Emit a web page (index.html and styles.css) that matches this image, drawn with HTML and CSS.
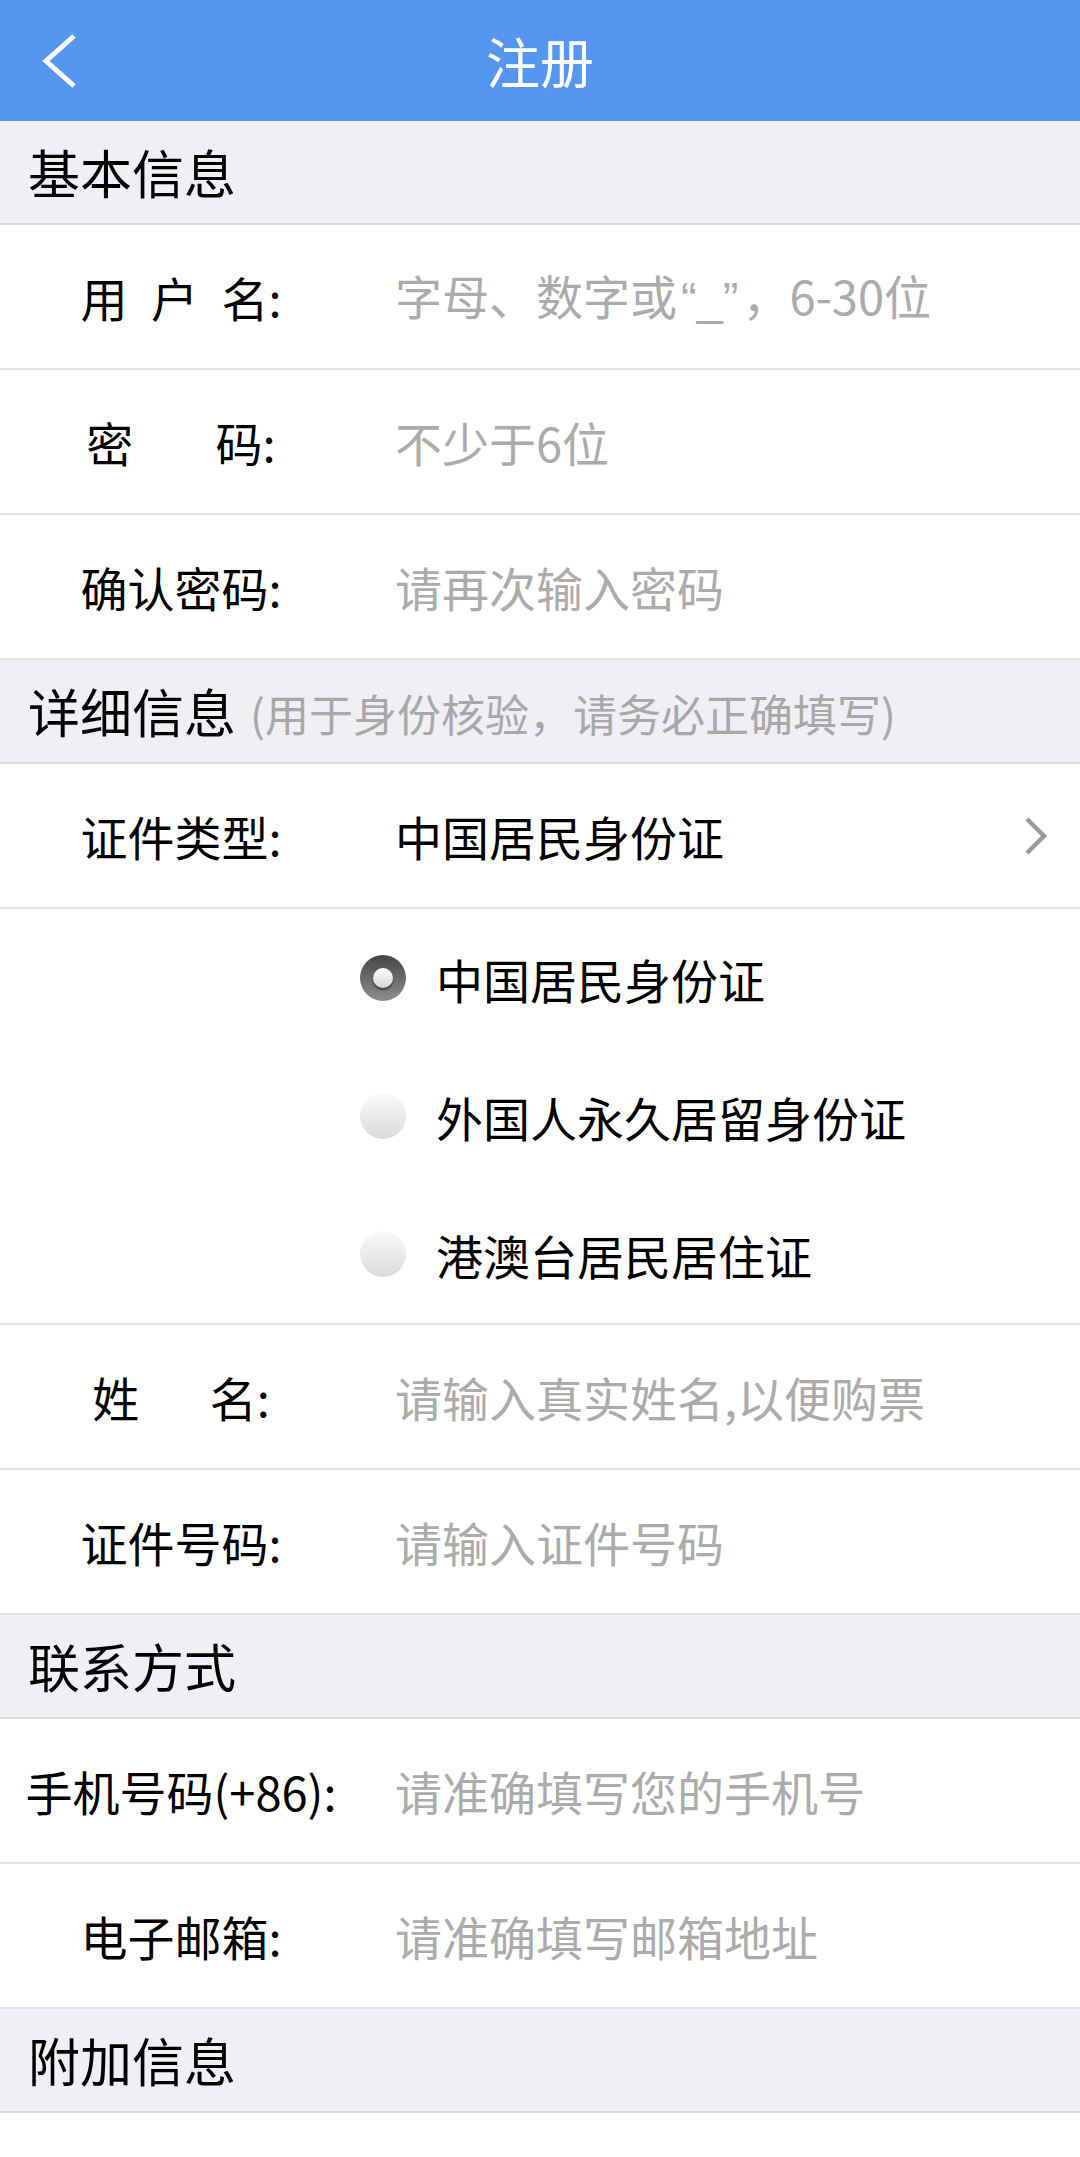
FILE: index.html
```html
<!DOCTYPE html>
<html lang="zh-CN">
<head>
<meta charset="utf-8">
<title>注册</title>
<link rel="stylesheet" href="styles.css">
</head>
<body>
<div class="page">
  <header class="nav">
    <div class="nav-back">
      <svg width="40" height="56" viewBox="0 0 40 56"><polyline points="34,3 6,28 34,53" fill="none" stroke="#ffffff" stroke-width="5"/></svg>
    </div>
    <div class="nav-title">注册</div>
    <div></div>
  </header>

  <div class="sec">基本信息</div>
  <div class="row"><div class="label">用&#8194;户&#8194;名:</div><div class="value ph">字母、数字或<span class="latin">“_”</span>，6-30位</div></div>
  <div class="row"><div class="label">密&#12288;&#8194;&#8197;码:</div><div class="value ph">不少于6位</div></div>
  <div class="row"><div class="label">确认密码:</div><div class="value ph">请再次输入密码</div></div>

  <div class="sec">详细信息<span class="sec-sub">(用于身份核验，请务必正确填写)</span></div>
  <div class="row row-select"><div class="label">证件类型:</div><div class="value">中国居民身份证</div>
    <svg class="chev" width="24" height="38" viewBox="0 0 24 38"><polyline points="3,2 20,19 3,36" fill="none" stroke="#9a9a9a" stroke-width="4.5"/></svg>
  </div>
  <div class="radios">
    <div class="opt"><span class="radio on"></span><span>中国居民身份证</span></div>
    <div class="opt"><span class="radio"></span><span>外国人永久居留身份证</span></div>
    <div class="opt"><span class="radio"></span><span>港澳台居民居住证</span></div>
  </div>
  <div class="row"><div class="label">姓&#12288;&#8194;名:</div><div class="value ph">请输入真实姓名,以便购票</div></div>
  <div class="row"><div class="label">证件号码:</div><div class="value ph">请输入证件号码</div></div>

  <div class="sec">联系方式</div>
  <div class="row"><div class="label">手机号码(+86):</div><div class="value ph">请准确填写您的手机号</div></div>
  <div class="row"><div class="label">电子邮箱:</div><div class="value ph">请准确填写邮箱地址</div></div>

  <div class="sec">附加信息</div>
</div>
</body>
</html>
```

FILE: styles.css
```css
* { box-sizing: border-box; }
html, body {
  margin: 0;
  padding: 0;
  background: #ffffff;
}
body {
  font-family: "Noto Sans CJK SC", "Noto Sans", sans-serif;
  color: #000000;
}
.page {
  width: 1080px;
  min-height: 2157px;
  background: #ffffff;
}
.nav {
  height: 121px;
  background: #5496f0;
  display: grid;
  grid-template-columns: 1fr auto 1fr;
  align-items: center;
}
.nav-back {
  padding-left: 40px;
  display: flex;
  align-items: center;
  height: 121px;
}
.nav-back svg { display: block; }
.nav-title {
  color: #ffffff;
  font-size: 54px;
  line-height: 1;
}
.sec {
  height: 104px;
  background: #efeff4;
  border-bottom: 2px solid #dadada;
  display: flex;
  align-items: center;
  padding-left: 28px;
  font-size: 52px;
  line-height: 1;
}
.sec-sub {
  color: #a8a8a8;
  font-size: 44px;
  margin-left: 14px;
  position: relative;
  top: 2px;
}
.row {
  height: 145px;
  border-bottom: 2px solid #e2e2e2;
  display: grid;
  grid-template-columns: 362px 1fr auto;
  align-items: center;
  font-size: 47px;
  line-height: 1;
}
.label {
  text-align: center;
  white-space: nowrap;
}
.value {
  padding-left: 33px;
  white-space: nowrap;
}
.latin {
  font-family: "Liberation Sans", "Noto Sans", sans-serif;
  margin: 0 4px;
}
.ph { color: #ababab; }
.chev {
  display: block;
  margin-right: 32px;
}
.radios {
  height: 416px;
  border-bottom: 2px solid #e2e2e2;
  padding-left: 360px;
  display: flex;
  flex-direction: column;
  font-size: 47px;
  line-height: 1;
}
.opt {
  flex: 1;
  display: flex;
  align-items: center;
  gap: 30px;
}
.radio {
  width: 46px;
  height: 46px;
  border-radius: 50%;
  background: linear-gradient(#fbfbfb, #dadada);
  flex: none;
  display: flex;
  align-items: center;
  justify-content: center;
}
.radio.on {
  background: linear-gradient(#454545, #8e8e8e);
}
.radio.on::after {
  content: "";
  width: 20px;
  height: 20px;
  border-radius: 50%;
  background: linear-gradient(#ffffff, #d4d4d4);
  box-shadow: 0 2px 2px rgba(0, 0, 0, 0.55);
}
```
